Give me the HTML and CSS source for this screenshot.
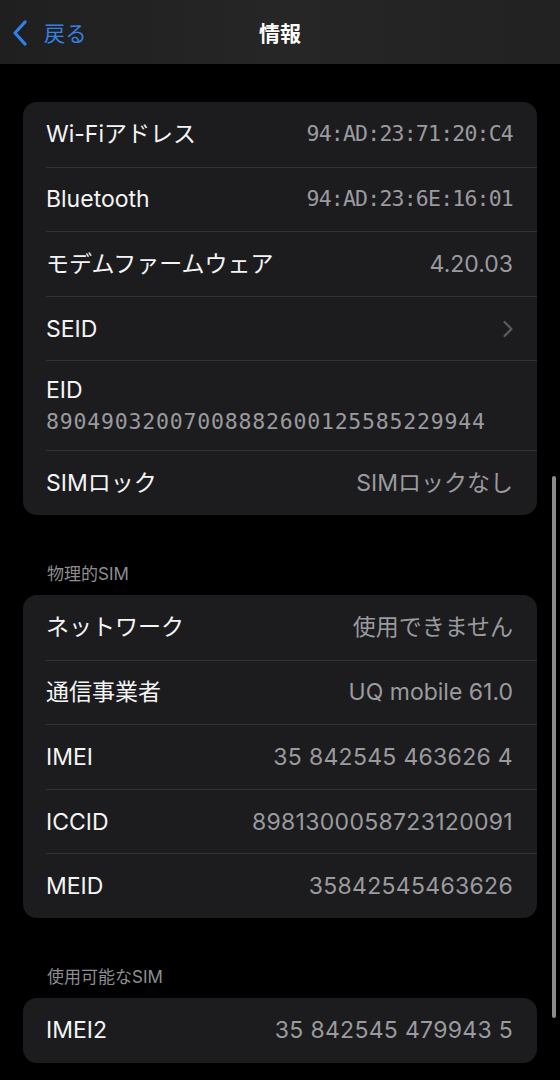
FILE: index.html
```html
<!DOCTYPE html>
<html lang="ja">
<head>
<meta charset="utf-8">
<link rel="stylesheet" href="styles.css">
</head>
<body>
<div class="screen">
  <header class="nav">
    <div class="back">
      <svg class="back-chev" width="16" height="26" viewBox="0 0 16 26"><path d="M13 2 L3 13 L13 24" fill="none" stroke="#2f80ea" stroke-width="3.2" stroke-linecap="round" stroke-linejoin="round"/></svg>
      <span class="back-text">戻る</span>
    </div>
    <div class="title">情報</div>
  </header>

  <main class="content">
    <section class="card first">
      <div class="row"><div class="row-body"><span class="label">Wi-Fiアドレス</span><span class="value mono">94:AD:23:71:20:C4</span></div></div>
      <div class="row"><div class="row-body"><span class="label">Bluetooth</span><span class="value mono">94:AD:23:6E:16:01</span></div></div>
      <div class="row"><div class="row-body"><span class="label">モデムファームウェア</span><span class="value">4.20.03</span></div></div>
      <div class="row"><div class="row-body"><span class="label">SEID</span><svg class="chev" width="12" height="18" viewBox="0 0 12 18"><path d="M2.5 2 L9.5 9 L2.5 16" fill="none" stroke="#5b5b60" stroke-width="2.2" stroke-linecap="round" stroke-linejoin="round"/></svg></div></div>
      <div class="row"><div class="row-body tall"><span class="label">EID</span><span class="value mono eid">89049032007008882600125585229944</span></div></div>
      <div class="row"><div class="row-body"><span class="label">SIMロック</span><span class="value">SIMロックなし</span></div></div>
    </section>

    <div class="section-title">物理的SIM</div>
    <section class="card">
      <div class="row"><div class="row-body"><span class="label">ネットワーク</span><span class="value">使用できません</span></div></div>
      <div class="row"><div class="row-body"><span class="label">通信事業者</span><span class="value">UQ mobile 61.0</span></div></div>
      <div class="row"><div class="row-body"><span class="label">IMEI</span><span class="value num">35 842545 463626 4</span></div></div>
      <div class="row"><div class="row-body"><span class="label">ICCID</span><span class="value num">8981300058723120091</span></div></div>
      <div class="row"><div class="row-body"><span class="label">MEID</span><span class="value num">35842545463626</span></div></div>
    </section>

    <div class="section-title">使用可能なSIM</div>
    <section class="card">
      <div class="row"><div class="row-body"><span class="label">IMEI2</span><span class="value num">35 842545 479943 5</span></div></div>
    </section>
  </main>
  <div class="scrollbar"></div>
</div>
</body>
</html>
```

FILE: styles.css
```css
* { box-sizing: border-box; }
html, body {
  margin: 0;
  padding: 0;
  background: #000;
}
body {
  font-family: Inter, "Noto Sans CJK JP", sans-serif;
  color: #f4f4f6;
  width: 560px;
  height: 1080px;
  overflow: hidden;
}
.screen {
  position: relative;
  width: 560px;
  height: 1080px;
  background: #000;
}
.nav {
  position: relative;
  height: 64px;
  background: linear-gradient(90deg, #1f1f1f 0%, #262626 50%, #222 100%);
  display: flex;
  align-items: center;
  justify-content: center;
}
.back {
  position: absolute;
  left: 12px;
  top: 0;
  height: 64px;
  display: flex;
  align-items: center;
  gap: 16px;
}
.back-chev { display: block; margin-top: 1px; }
.back-text {
  font-family: "Noto Sans CJK JP", sans-serif;
  font-size: 21px;
  color: #3582e6;
  letter-spacing: 0.5px;
}
.title {
  font-family: "Noto Sans CJK JP", sans-serif;
  font-weight: 700;
  font-size: 21px;
  color: #fff;
}
.content {
  padding: 38px 23px 0 23px;
}
.card {
  background: #1c1c1e;
  border-radius: 14px;
  overflow: hidden;
}
.row {
  padding-left: 23px;
}
.row-body {
  height: 64.6px;
  display: flex;
  align-items: center;
  justify-content: space-between;
  padding-right: 24px;
  border-top: 1px solid #323235;
}
.row:first-child .row-body { border-top: none; }
.row-body.tall {
  height: 90px;
  flex-direction: column;
  align-items: flex-start;
  justify-content: center;
  gap: 6px;
}
.label {
  font-size: 23px;
  color: #f4f4f6;
  line-height: 26px;
}
.value {
  font-size: 23px;
  color: #9a9a9f;
  line-height: 26px;
}
.value.num {
  letter-spacing: 0.3px;
}
.value.mono {
  font-family: "DejaVu Sans Mono", monospace;
  font-size: 21.5px;
  letter-spacing: -0.8px;
}
.value.mono.eid {
  font-size: 21.5px;
  letter-spacing: 0.8px;
}
.chev { display: block; margin-right: -1px; }
.section-title {
  height: 80px;
  padding: 48px 0 0 24px;
  font-family: Inter, "Noto Sans CJK JP", sans-serif;
  font-size: 17px;
  line-height: 22px;
  color: #8d8d92;
}
.scrollbar {
  position: absolute;
  left: 552px;
  top: 476px;
  width: 3.5px;
  height: 542px;
  border-radius: 2px;
  background: #8b8b8e;
}
```
